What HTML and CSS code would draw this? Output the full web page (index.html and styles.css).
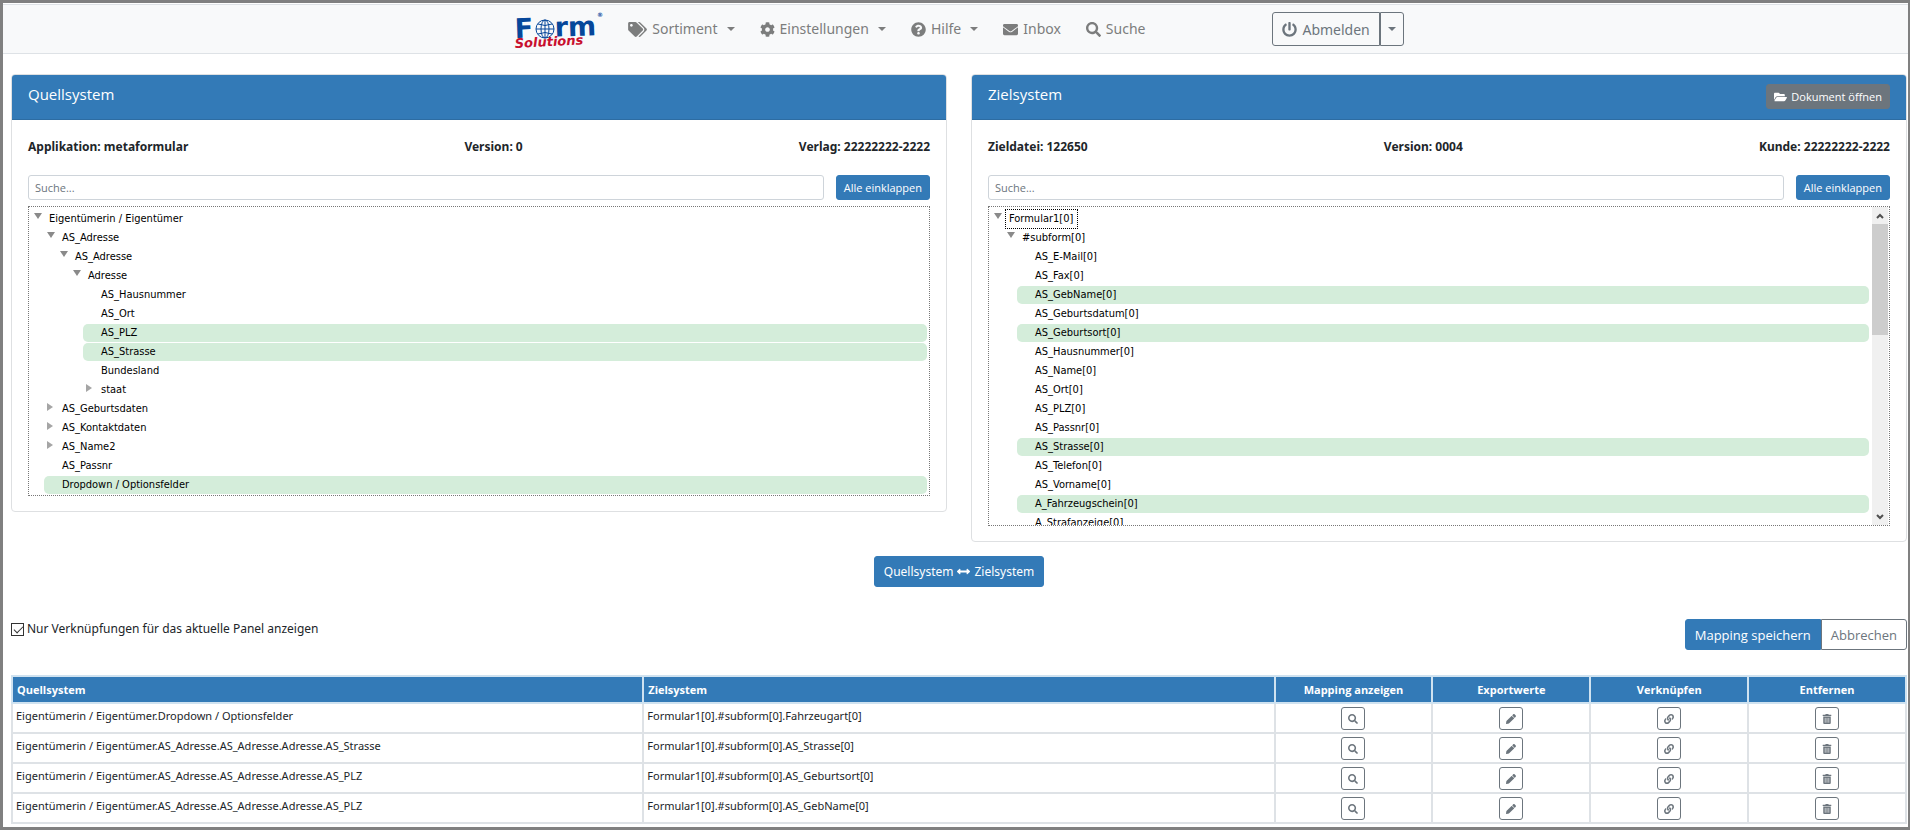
FILE: index.html
```html
<!DOCTYPE html>
<html lang="de">
<head>
<meta charset="utf-8">
<title>Form Solutions – Mapping</title>
<link rel="stylesheet" href="styles.css">
</head>
<body>
<svg class="sprite" aria-hidden="true">
  <symbol id="i-tags" viewBox="0 0 640 512"><path d="M497.941 225.941L286.059 14.059A48 48 0 0 0 252.118 0H48C21.49 0 0 21.49 0 48v204.118a48 48 0 0 0 14.059 33.941l211.882 211.882c18.744 18.745 49.136 18.746 67.882 0l204.118-204.118c18.745-18.745 18.745-49.137 0-67.882zM112 160c-26.51 0-48-21.49-48-48s21.49-48 48-48 48 21.49 48 48-21.49 48-48 48zm513.941 133.823L421.823 497.941c-18.745 18.745-49.137 18.745-67.882 0l-.36-.36L527.64 323.522c16.999-16.999 26.36-39.6 26.36-63.64s-9.362-46.641-26.36-63.64L331.397 0h48.721a48 48 0 0 1 33.941 14.059l211.882 211.882c18.745 18.745 18.745 49.137 0 67.882z"/></symbol>
  <symbol id="i-cog" viewBox="0 0 512 512"><path d="M487.4 315.7l-42.6-24.6c4.3-23.2 4.3-47 0-70.2l42.6-24.6c4.9-2.8 7.1-8.6 5.5-14-11.1-35.6-30-67.8-54.7-94.6-3.8-4.1-10-5.1-14.8-2.3L380.8 110c-17.9-15.4-38.5-27.3-60.8-35.1V25.8c0-5.6-3.9-10.5-9.4-11.7-36.7-8.2-74.3-7.8-109.2 0-5.5 1.2-9.4 6.1-9.4 11.7V75c-22.2 7.9-42.8 19.8-60.8 35.1L88.7 85.5c-4.9-2.8-11-1.9-14.8 2.3-24.7 26.7-43.6 58.9-54.7 94.6-1.7 5.4.6 11.2 5.5 14L67.3 221c-4.3 23.2-4.3 47 0 70.2l-42.6 24.6c-4.9 2.8-7.1 8.6-5.5 14 11.1 35.6 30 67.8 54.7 94.6 3.8 4.1 10 5.1 14.8 2.3l42.6-24.6c17.9 15.4 38.5 27.3 60.8 35.1v49.2c0 5.6 3.9 10.5 9.4 11.7 36.7 8.2 74.3 7.8 109.2 0 5.5-1.2 9.4-6.1 9.4-11.7v-49.2c22.2-7.9 42.8-19.8 60.8-35.1l42.6 24.6c4.9 2.8 11 1.9 14.8-2.3 24.7-26.7 43.6-58.9 54.7-94.6 1.5-5.5-.7-11.3-5.6-14.1zM256 336c-44.1 0-80-35.9-80-80s35.9-80 80-80 80 35.9 80 80-35.9 80-80 80z"/></symbol>
  <symbol id="i-help" viewBox="0 0 512 512"><path d="M504 256c0 136.997-111.043 248-248 248S8 392.997 8 256C8 119.083 119.043 8 256 8s248 111.083 248 248zM262.655 90c-54.497 0-89.255 22.957-116.549 63.758-3.536 5.286-2.353 12.415 2.715 16.258l34.699 26.31c5.205 3.947 12.621 3.008 16.665-2.122 17.864-22.658 30.113-35.797 57.303-35.797 20.429 0 45.698 13.148 45.698 32.958 0 14.976-12.363 22.667-32.534 33.976C247.128 238.528 216 254.941 216 296v4c0 6.627 5.373 12 12 12h56c6.627 0 12-5.373 12-12v-1.333c0-28.462 83.186-29.647 83.186-106.667 0-58.002-60.165-102-116.531-102zM256 338c-25.365 0-46 20.635-46 46 0 25.364 20.635 46 46 46s46-20.636 46-46c0-25.365-20.635-46-46-46z"/></symbol>
  <symbol id="i-mail" viewBox="0 0 512 512"><path d="M502.3 190.8c3.9-3.1 9.7-.2 9.7 4.7V400c0 26.5-21.5 48-48 48H48c-26.5 0-48-21.5-48-48V195.6c0-5 5.7-7.8 9.7-4.7 22.4 17.4 52.1 39.5 154.1 113.6 21.1 15.4 56.7 47.8 92.2 47.6 35.7.3 72-32.8 92.3-47.6 102-74.1 131.6-96.3 154-113.7zM256 320c23.2.4 56.6-29.2 73.4-41.4 132.7-96.3 142.8-104.7 173.4-128.7 5.8-4.5 9.2-11.5 9.2-18.9v-19c0-26.5-21.5-48-48-48H48c-26.5 0-48 21.5-48 48v19c0 7.4 3.4 14.3 9.2 18.9 30.6 23.9 40.7 32.4 173.4 128.7 16.8 12.2 50.2 41.8 73.4 41.4z"/></symbol>
  <symbol id="i-search" viewBox="0 0 512 512"><path d="M505 442.7L405.3 343c-4.5-4.5-10.6-7-17-7H372c27.6-35.3 44-79.7 44-128C416 93.1 322.9 0 208 0S0 93.1 0 208s93.1 208 208 208c48.3 0 92.7-16.4 128-44v16.3c0 6.4 2.5 12.5 7 17l99.7 99.7c9.4 9.4 24.6 9.4 33.9 0l28.3-28.3c9.4-9.4 9.4-24.6.1-34zM208 336c-70.7 0-128-57.2-128-128 0-70.7 57.2-128 128-128 70.7 0 128 57.2 128 128 0 70.7-57.2 128-128 128z"/></symbol>
  <symbol id="i-power" viewBox="0 0 512 512"><path d="M400 54.1c63 45 104 118.6 104 201.9 0 136.8-110.8 247.7-247.5 248C120 504.3 8.2 393 8 256.4 7.9 173.1 48.9 99.3 111.8 54.2c11.7-8.3 28-4.8 35 7.7L162.6 90c5.9 10.5 3.1 23.8-6.6 31-41.5 30.8-68 79.6-68 134.9-.1 92.3 74.5 168.1 168 168.1 91.6 0 168.6-74.2 168-169.1-.3-51.8-24.7-101.8-68.1-134-9.7-7.2-12.4-20.5-6.5-30.9l15.8-28.1c7-12.4 23.2-16.1 34.8-7.8zM296 264V24c0-13.3-10.7-24-24-24h-32c-13.3 0-24 10.7-24 24v240c0 13.3 10.7 24 24 24h32c13.3 0 24-10.7 24-24z"/></symbol>
  <symbol id="i-folder" viewBox="0 0 576 512"><path d="M572.694 292.093L500.27 416.248A63.997 63.997 0 0 1 444.989 448H45.025c-18.523 0-30.064-20.093-20.731-36.093l72.424-124.155A64 64 0 0 1 152 256h399.964c18.523 0 30.064 20.093 20.73 36.093zM152 224h328v-48c0-26.51-21.49-48-48-48H272l-64-64H48C21.49 64 0 85.49 0 112v278.046l69.077-118.418C86.214 242.25 117.989 224 152 224z"/></symbol>
  <symbol id="i-arrows" viewBox="0 0 512 512"><path d="M377.941 169.941V216H134.059v-46.059c0-21.382-25.851-32.09-40.971-16.971L7.029 239.029c-9.373 9.373-9.373 24.568 0 33.941l86.059 86.059c15.119 15.119 40.971 4.411 40.971-16.971V296h243.882v46.059c0 21.382 25.851 32.09 40.971 16.971l86.059-86.059c9.373-9.373 9.373-24.568 0-33.941l-86.059-86.059c-15.119-15.12-40.971-4.412-40.971 16.97z"/></symbol>
  <symbol id="i-pencil" viewBox="0 0 512 512"><path d="M497.9 142.1l-46.1 46.1c-4.7 4.7-12.3 4.7-17 0l-111-111c-4.7-4.7-4.7-12.3 0-17l46.1-46.1c18.7-18.7 49.1-18.7 67.9 0l60.1 60.1c18.8 18.7 18.8 49.1 0 67.9zM284.2 99.8L21.6 362.4.4 483.9c-2.9 16.4 11.4 30.6 27.8 27.8l121.5-21.3 262.6-262.6c4.7-4.7 4.7-12.3 0-17l-111-111c-4.8-4.7-12.4-4.7-17.1 0z"/></symbol>
  <symbol id="i-link" viewBox="0 0 512 512"><path d="M326.612 185.391c59.747 59.809 58.927 155.698.36 214.59-.11.12-.24.25-.36.37l-67.2 67.2c-59.27 59.27-155.699 59.262-214.96 0-59.27-59.26-59.27-155.7 0-214.96l37.106-37.106c9.84-9.84 26.786-3.3 27.294 10.606.648 17.722 3.826 35.527 9.69 52.721 1.986 5.822.567 12.262-3.783 16.612l-13.087 13.087c-28.026 28.026-28.905 73.66-1.155 101.96 28.024 28.579 74.086 28.749 102.325.51l67.2-67.19c28.191-28.191 28.073-73.757 0-101.83-3.701-3.694-7.429-6.564-10.341-8.569a16.037 16.037 0 0 1-6.947-12.606c-.396-10.567 3.348-21.456 11.698-29.806l21.054-21.055c5.521-5.521 14.182-6.199 20.584-1.731a152.482 152.482 0 0 1 20.522 17.197zM467.547 44.449c-59.261-59.262-155.69-59.27-214.96 0l-67.2 67.2c-.12.12-.25.25-.36.37-58.566 58.892-59.387 154.781.36 214.59a152.454 152.454 0 0 0 20.521 17.196c6.402 4.468 15.064 3.789 20.584-1.731l21.054-21.055c8.35-8.35 12.094-19.239 11.698-29.806a16.037 16.037 0 0 0-6.947-12.606c-2.912-2.005-6.64-4.875-10.341-8.569-28.073-28.073-28.191-73.639 0-101.83l67.2-67.19c28.239-28.239 74.3-28.069 102.325.51 27.75 28.3 26.872 73.934-1.155 101.96l-13.087 13.087c-4.35 4.35-5.769 10.79-3.783 16.612 5.864 17.194 9.042 34.999 9.69 52.721.509 13.906 17.454 20.446 27.294 10.606l37.106-37.106c59.271-59.259 59.271-155.699.001-214.959z"/></symbol>
  <symbol id="i-trash" viewBox="0 0 448 512"><path d="M32 464a48 48 0 0 0 48 48h288a48 48 0 0 0 48-48V128H32zm272-256a16 16 0 0 1 32 0v224a16 16 0 0 1-32 0zm-96 0a16 16 0 0 1 32 0v224a16 16 0 0 1-32 0zm-96 0a16 16 0 0 1 32 0v224a16 16 0 0 1-32 0zM432 32H312l-9.4-18.7A24 24 0 0 0 281.1 0H166.8a23.72 23.72 0 0 0-21.4 13.3L136 32H16A16 16 0 0 0 0 48v32a16 16 0 0 0 16 16h416a16 16 0 0 0 16-16V48a16 16 0 0 0-16-16z"/></symbol>
</svg>

<div class="page">
  <header class="navbar">
    <a class="brand" href="#" aria-label="Form Solutions">
      <svg class="logo" viewBox="0 0 90 40">
        <g class="logo-form" transform="rotate(-2 0 29)">
          <text x="0" y="29" font-size="27">F</text>
          <text x="40" y="29" font-size="27">rm</text>
        </g>
        <text class="logo-mark" x="82" y="8" font-size="6">®</text>
        <g class="logo-globe">
          <circle cx="30" cy="20" r="9"/>
          <ellipse cx="30" cy="20" rx="4" ry="9"/>
          <path d="M21 20h18M30 11v18M23 15q7 3 14 0M23 25q7 -3 14 0"/>
        </g>
        <text class="logo-sub" x="0" y="39" font-size="13" transform="rotate(-3 0 39)">Solutions</text>
      </svg>
    </a>
    <nav class="menu">
      <a class="menu-item" href="#"><svg class="icon icon-wide"><use href="#i-tags"/></svg>Sortiment<span class="caret"></span></a>
      <a class="menu-item" href="#"><svg class="icon"><use href="#i-cog"/></svg>Einstellungen<span class="caret"></span></a>
      <a class="menu-item" href="#"><svg class="icon"><use href="#i-help"/></svg>Hilfe<span class="caret"></span></a>
      <a class="menu-item" href="#"><svg class="icon"><use href="#i-mail"/></svg>Inbox</a>
      <a class="menu-item" href="#"><svg class="icon"><use href="#i-search"/></svg>Suche</a>
    </nav>
    <div class="btn-group logout">
      <button class="btn btn-outline btn-nav" type="button"><svg class="icon"><use href="#i-power"/></svg>Abmelden</button>
      <button class="btn btn-outline btn-toggle" type="button" aria-label="Mehr"><span class="caret"></span></button>
    </div>
  </header>

  <main class="content">
    <div class="panels">
      <section class="card">
        <div class="card-header"><h1 class="card-title">Quellsystem</h1></div>
        <div class="card-body">
          <div class="info"><span>Applikation: metaformular</span><span>Version: 0</span><span>Verlag: 22222222-2222</span></div>
          <div class="search">
            <input class="search-input" type="search" placeholder="Suche..." aria-label="Quellsystem durchsuchen">
            <button class="btn btn-primary btn-sm" type="button">Alle einklappen</button>
          </div>
          <div class="tree">
            <ul class="nodes">
              <li><div class="node open">Eigentümerin / Eigentümer</div>
                <ul>
                  <li><div class="node open">AS_Adresse</div>
                    <ul>
                      <li><div class="node open">AS_Adresse</div>
                        <ul>
                          <li><div class="node open">Adresse</div>
                            <ul>
                              <li><div class="node">AS_Hausnummer</div></li>
                              <li><div class="node">AS_Ort</div></li>
                              <li><div class="node linked">AS_PLZ</div></li>
                              <li><div class="node linked">AS_Strasse</div></li>
                              <li><div class="node">Bundesland</div></li>
                              <li><div class="node closed">staat</div></li>
                            </ul>
                          </li>
                        </ul>
                      </li>
                    </ul>
                  </li>
                  <li><div class="node closed">AS_Geburtsdaten</div></li>
                  <li><div class="node closed">AS_Kontaktdaten</div></li>
                  <li><div class="node closed">AS_Name2</div></li>
                  <li><div class="node">AS_Passnr</div></li>
                  <li><div class="node linked">Dropdown / Optionsfelder</div></li>
                </ul>
              </li>
            </ul>
          </div>
        </div>
      </section>

      <section class="card">
        <div class="card-header">
          <h1 class="card-title">Zielsystem</h1>
          <button class="btn btn-secondary btn-sm" type="button"><svg class="icon icon-folder"><use href="#i-folder"/></svg>Dokument öffnen</button>
        </div>
        <div class="card-body">
          <div class="info"><span>Zieldatei: 122650</span><span>Version: 0004</span><span>Kunde: 22222222-2222</span></div>
          <div class="search">
            <input class="search-input" type="search" placeholder="Suche..." aria-label="Zielsystem durchsuchen">
            <button class="btn btn-primary btn-sm" type="button">Alle einklappen</button>
          </div>
          <div class="tree tree-scroll">
            <ul class="nodes">
              <li><div class="node open"><span class="focused">Formular1[0]</span></div>
                <ul>
                  <li><div class="node open">#subform[0]</div>
                    <ul>
                      <li><div class="node">AS_E-Mail[0]</div></li>
                      <li><div class="node">AS_Fax[0]</div></li>
                      <li><div class="node linked">AS_GebName[0]</div></li>
                      <li><div class="node">AS_Geburtsdatum[0]</div></li>
                      <li><div class="node linked">AS_Geburtsort[0]</div></li>
                      <li><div class="node">AS_Hausnummer[0]</div></li>
                      <li><div class="node">AS_Name[0]</div></li>
                      <li><div class="node">AS_Ort[0]</div></li>
                      <li><div class="node">AS_PLZ[0]</div></li>
                      <li><div class="node">AS_Passnr[0]</div></li>
                      <li><div class="node linked">AS_Strasse[0]</div></li>
                      <li><div class="node">AS_Telefon[0]</div></li>
                      <li><div class="node">AS_Vorname[0]</div></li>
                      <li><div class="node linked">A_Fahrzeugschein[0]</div></li>
                      <li><div class="node">A_Strafanzeige[0]</div></li>
                    </ul>
                  </li>
                </ul>
              </li>
            </ul>
            <div class="scrollbar" aria-hidden="true">
              <svg class="scroll-arrow" viewBox="0 0 16 17"><path d="M5 11l3-3 3 3"/></svg>
              <div class="scroll-track"><div class="scroll-thumb"></div></div>
              <svg class="scroll-arrow" viewBox="0 0 16 17"><path d="M5 7l3 3 3-3"/></svg>
            </div>
          </div>
        </div>
      </section>
    </div>

    <div class="connect">
      <button class="btn btn-primary btn-connect" type="button">Quellsystem<svg class="icon icon-arrows"><use href="#i-arrows"/></svg>Zielsystem</button>
    </div>

    <div class="actions">
      <label class="check"><input class="check-box" type="checkbox" checked>Nur Verknüpfungen für das aktuelle Panel anzeigen</label>
      <div class="btn-group">
        <button class="btn btn-primary" type="button">Mapping speichern</button>
        <button class="btn btn-outline btn-cancel" type="button">Abbrechen</button>
      </div>
    </div>

    <table class="mapping">
      <colgroup><col class="col-name"><col class="col-name"><col class="col-tool"><col class="col-tool"><col class="col-tool"><col class="col-tool"></colgroup>
      <thead>
        <tr><th>Quellsystem</th><th>Zielsystem</th><th class="tool">Mapping anzeigen</th><th class="tool">Exportwerte</th><th class="tool">Verknüpfen</th><th class="tool">Entfernen</th></tr>
      </thead>
      <tbody>
        <tr>
          <td>Eigentümerin / Eigentümer.Dropdown / Optionsfelder</td><td>Formular1[0].#subform[0].Fahrzeugart[0]</td>
          <td class="tool"><button class="btn-icon" type="button" aria-label="Mapping anzeigen"><svg><use href="#i-search"/></svg></button></td>
          <td class="tool"><button class="btn-icon" type="button" aria-label="Exportwerte"><svg><use href="#i-pencil"/></svg></button></td>
          <td class="tool"><button class="btn-icon" type="button" aria-label="Verknüpfen"><svg><use href="#i-link"/></svg></button></td>
          <td class="tool"><button class="btn-icon" type="button" aria-label="Entfernen"><svg><use href="#i-trash"/></svg></button></td>
        </tr>
        <tr>
          <td>Eigentümerin / Eigentümer.AS_Adresse.AS_Adresse.Adresse.AS_Strasse</td><td>Formular1[0].#subform[0].AS_Strasse[0]</td>
          <td class="tool"><button class="btn-icon" type="button" aria-label="Mapping anzeigen"><svg><use href="#i-search"/></svg></button></td>
          <td class="tool"><button class="btn-icon" type="button" aria-label="Exportwerte"><svg><use href="#i-pencil"/></svg></button></td>
          <td class="tool"><button class="btn-icon" type="button" aria-label="Verknüpfen"><svg><use href="#i-link"/></svg></button></td>
          <td class="tool"><button class="btn-icon" type="button" aria-label="Entfernen"><svg><use href="#i-trash"/></svg></button></td>
        </tr>
        <tr>
          <td>Eigentümerin / Eigentümer.AS_Adresse.AS_Adresse.Adresse.AS_PLZ</td><td>Formular1[0].#subform[0].AS_Geburtsort[0]</td>
          <td class="tool"><button class="btn-icon" type="button" aria-label="Mapping anzeigen"><svg><use href="#i-search"/></svg></button></td>
          <td class="tool"><button class="btn-icon" type="button" aria-label="Exportwerte"><svg><use href="#i-pencil"/></svg></button></td>
          <td class="tool"><button class="btn-icon" type="button" aria-label="Verknüpfen"><svg><use href="#i-link"/></svg></button></td>
          <td class="tool"><button class="btn-icon" type="button" aria-label="Entfernen"><svg><use href="#i-trash"/></svg></button></td>
        </tr>
        <tr>
          <td>Eigentümerin / Eigentümer.AS_Adresse.AS_Adresse.Adresse.AS_PLZ</td><td>Formular1[0].#subform[0].AS_GebName[0]</td>
          <td class="tool"><button class="btn-icon" type="button" aria-label="Mapping anzeigen"><svg><use href="#i-search"/></svg></button></td>
          <td class="tool"><button class="btn-icon" type="button" aria-label="Exportwerte"><svg><use href="#i-pencil"/></svg></button></td>
          <td class="tool"><button class="btn-icon" type="button" aria-label="Verknüpfen"><svg><use href="#i-link"/></svg></button></td>
          <td class="tool"><button class="btn-icon" type="button" aria-label="Entfernen"><svg><use href="#i-trash"/></svg></button></td>
        </tr>
      </tbody>
    </table>
  </main>
</div>
</body>
</html>
```
FILE: styles.css
```css
* { box-sizing: border-box; }

body {
  margin: 0;
  background: #fff;
  color: #212529;
  font-family: "Noto Sans", "Open Sans", sans-serif;
  font-size: 12px;
  line-height: 20px;
}

button, input { font-family: "Open Sans", "Noto Sans", sans-serif; margin: 0; }
ul { list-style: none; margin: 0; padding: 0; }
.sprite { display: none; }

.page {
  min-height: 100vh;
  border: 3px solid #808080;
  border-right-width: 2px;
}

/* Navigation */
.navbar {
  display: flex;
  align-items: center;
  justify-content: center;
  height: 50px;
  margin-top: 1px;
  padding-left: 8px;
  border: solid #dee2e6;
  border-width: 1px 0;
  background: #f8f9fa;
}
.brand { display: block; height: 40px; }
.logo { display: block; width: 90px; height: 40px; overflow: visible; }
.logo-form, .logo-mark { fill: #06479a; font-family: "DejaVu Sans", sans-serif; font-weight: 700; }
.logo-globe { fill: none; stroke: #06479a; stroke-width: 1; }
.logo-sub { fill: #c8102e; font-family: "DejaVu Sans", sans-serif; font-style: italic; font-weight: 700; }

.menu { display: flex; margin-left: 23px; gap: 25px; }
.menu-item {
  display: flex;
  align-items: center;
  gap: 5px;
  color: #7c7d7d;
  font-size: 14px;
  line-height: 24px;
  text-decoration: none;
}
.icon { flex: none; width: 15px; height: 15px; fill: currentColor; }
.icon-wide { width: 19px; }
.caret {
  width: 8px;
  border: 4px solid transparent;
  border-top-color: currentColor;
  border-bottom: 0;
}
.menu-item .caret { margin-left: 4px; }
.logout { margin-left: 127px; }

/* Buttons */
.btn {
  display: inline-flex;
  align-items: center;
  justify-content: center;
  gap: 4px;
  height: 31px;
  padding: 0 9px;
  border: 1px solid transparent;
  border-radius: 3px;
  font-size: 13px;
  white-space: nowrap;
}
.btn-primary { background: #337ab7; border-color: #337ab7; color: #fff; }
.btn-secondary { background: #6c757d; border-color: #6c757d; color: #fff; }
.btn-outline { background: transparent; border-color: #6c757d; color: #6c757d; }
.btn-sm { height: 25px; padding: 0 7px; font-size: 11px; }
.btn-nav { height: 34px; font-family: "Noto Sans", sans-serif; font-size: 14px; gap: 5px; }
.btn-toggle { height: 34px; padding: 0 7px; }
.btn-connect { font-family: "Noto Sans", sans-serif; font-size: 12px; }
.btn-cancel { background: #fff; }
.btn-group { display: flex; }
.btn-group .btn:first-child { border-top-right-radius: 0; border-bottom-right-radius: 0; }
.btn-group .btn:last-child { border-top-left-radius: 0; border-bottom-left-radius: 0; }
.icon-folder { width: 13px; height: 12px; }
.icon-arrows { width: 13px; height: 13px; }

/* Panels */
.content { padding: 20px 1px 0 8px; }
.panels {
  display: grid;
  grid-template-columns: 1fr 1fr;
  gap: 24px;
  align-items: start;
}
.card { min-width: 0; border: 1px solid #dee0e2; border-radius: 4px; }
.card-header {
  display: flex;
  justify-content: space-between;
  height: 45px;
  padding: 9px 16px;
  border-bottom: 1px solid #2d6ca2;
  border-radius: 3px 3px 0 0;
  background: #337ab7;
  color: #fff;
}
.card-title {
  margin: 0;
  font-family: "Open Sans", "Noto Sans", sans-serif;
  font-size: 15px;
  font-weight: 400;
  line-height: 20px;
}
.card-body { padding: 17px 16px 15px; }
.info { display: flex; justify-content: space-between; font-weight: 700; }
.search { display: flex; gap: 12px; margin: 18px 0 6px; }
.search-input {
  flex: 1;
  min-width: 0;
  height: 25px;
  padding: 0 6px;
  border: 1px solid #ced4da;
  border-radius: 3px;
  font-size: 11px;
}
.search-input::placeholder { color: #6c757d; opacity: 1; }

/* Trees */
.tree {
  padding: 3px 2px 0;
  border: 1px dotted #777;
  color: #000;
  font-family: "DejaVu Sans Condensed", "DejaVu Sans", sans-serif;
  font-size: 11px;
}
.nodes { flex: 1; min-width: 0; }
.nodes ul { padding-left: 13px; }
.node {
  position: relative;
  height: 18px;
  margin-bottom: 1px;
  padding-left: 18px;
  border-radius: 5px;
  line-height: 18px;
  white-space: nowrap;
}
.linked { background: #d4edda; }
.open::before, .closed::before {
  content: "";
  position: absolute;
  left: 3px;
  top: 3px;
  border: 4px solid transparent;
}
.open::before { border-top: 6px solid #8a8a8a; border-bottom: 0; }
.closed::before { border-left: 6px solid #a5a5a5; border-right: 0; }
.focused { display: inline-block; margin-left: -3px; padding: 0 4px 0 3px; outline: 1px dotted #000; }
.tree-scroll { display: flex; gap: 3px; height: 320px; padding: 0 1px 0 2px; overflow: hidden; }
.tree-scroll .nodes { padding-top: 3px; }
.scrollbar { display: flex; flex-direction: column; width: 16px; background: #f0f0f0; }
.scroll-arrow { width: 16px; height: 17px; fill: none; stroke: #505050; stroke-width: 2; }
.scroll-track { flex: 1; }
.scroll-thumb { height: 39%; background: #cdcdcd; }

/* Actions */
.connect { display: flex; justify-content: center; margin-top: 14px; }
.actions { display: flex; justify-content: space-between; align-items: flex-start; margin-top: 32px; }
.check { display: flex; align-items: center; gap: 3px; }
.check-box {
  appearance: none;
  width: 13px;
  height: 13px;
  border: 1px solid #333;
  background: #fff;
}
.check-box:checked::before {
  content: "";
  display: block;
  width: 8px;
  height: 4px;
  margin: 2px 0 0 2px;
  border: solid #333;
  border-width: 0 0 1px 1px;
  transform: rotate(-45deg);
}

/* Mapping table */
.mapping {
  width: 100%;
  margin-top: 25px;
  border-collapse: collapse;
  table-layout: fixed;
}
.col-name { width: 33.33%; }
.mapping th, .mapping td {
  height: 30px;
  padding: 2px 3px;
  border: 2px solid #dee2e6;
  font-size: 11px;
  text-align: left;
  vertical-align: top;
}
.mapping th {
  height: 27px;
  padding: 3px 4px 2px;
  border-color: #cfe2f0;
  background: #337ab7;
  color: #fff;
  font-family: "Open Sans", "Noto Sans", sans-serif;
}
.mapping .tool { text-align: center; }
.mapping td.tool { padding: 3px 0 0; }
.btn-icon {
  display: inline-flex;
  align-items: center;
  justify-content: center;
  width: 24px;
  height: 23px;
  padding: 0;
  border: 1px solid #6c757d;
  border-radius: 3px;
  background: transparent;
  color: #6c757d;
  vertical-align: top;
}
.btn-icon svg { width: 10px; height: 10px; fill: currentColor; }
```
